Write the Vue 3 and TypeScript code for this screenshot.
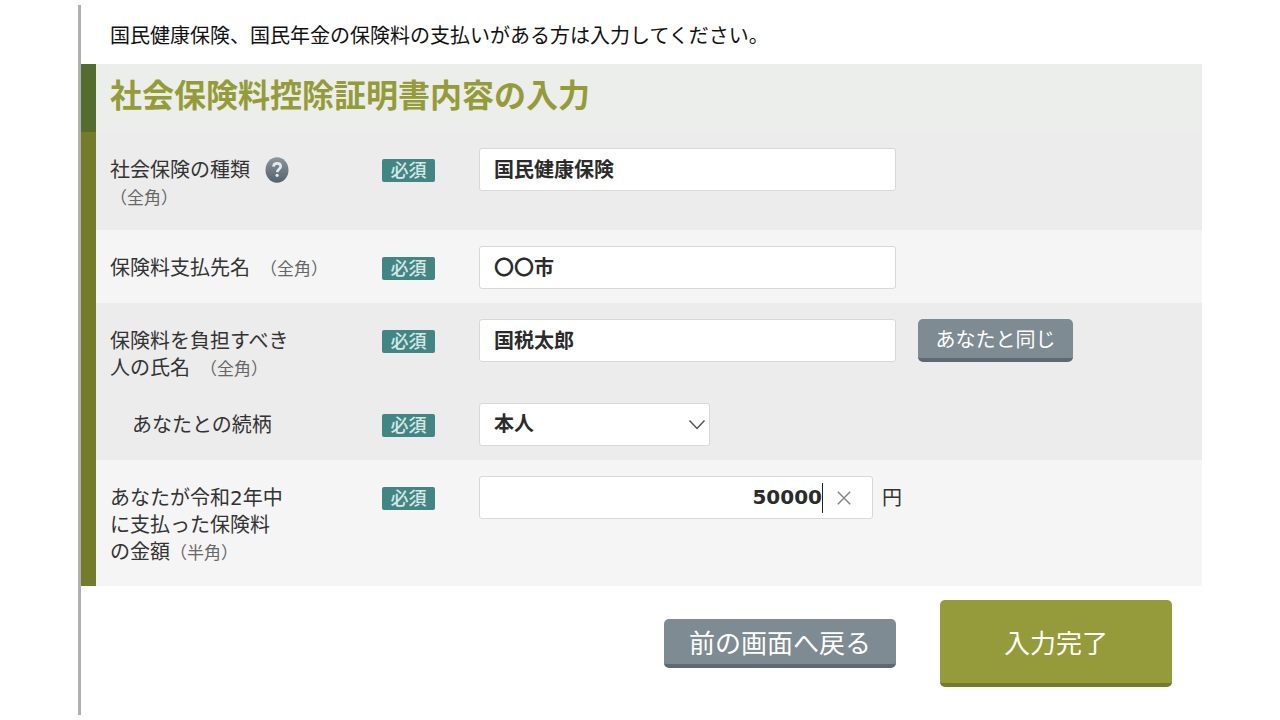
<script setup lang="ts">
import { ref } from 'vue'

const kind = ref('国民健康保険')
const payee = ref('〇〇市')
const payer = ref('国税太郎')
const relation = ref('本人')
const amount = ref('50000')
</script>

<template>
  <main class="page">
    <p class="intro">国民健康保険、国民年金の保険料の支払いがある方は入力してください。</p>
    <form class="form" @submit.prevent>
      <h1 class="title">社会保険料控除証明書内容の入力</h1>

      <section class="group">
        <div class="row">
          <div class="name">
            <label for="kind">社会保険の種類</label>
            <button type="button" class="help" aria-label="ヘルプ">
              <svg viewBox="0 0 24 26" width="24" height="26" aria-hidden="true">
                <defs>
                  <linearGradient id="ball" x1="0" y1="0" x2="0" y2="1">
                    <stop offset="0" stop-color="#8b969d" />
                    <stop offset="0.45" stop-color="#727e87" />
                    <stop offset="1" stop-color="#56626b" />
                  </linearGradient>
                </defs>
                <ellipse cx="12" cy="13" rx="11.5" ry="12.7" fill="url(#ball)" />
                <path d="M8.400 9.600c.3-2.200 1.700-3.200 3.700-3.200 2.100 0 3.600 1.100 3.600 3 0 2.400-3.200 2.900-3.500 5.800" fill="none" stroke="#e6eaec" stroke-width="2.600" />
                <circle cx="12.100" cy="18.300" r="1.600" fill="#e6eaec" />
              </svg>
            </button>
            <br /><small>（全角）</small>
          </div>
          <span class="badge">必須</span>
          <div class="field"><input id="kind" v-model="kind" class="box" type="text" /></div>
        </div>
      </section>

      <section class="group">
        <div class="row">
          <label class="name" for="payee">保険料支払先名<small class="apart">（全角）</small></label>
          <span class="badge">必須</span>
          <div class="field"><input id="payee" v-model="payee" class="box" type="text" /></div>
        </div>
      </section>

      <section class="group">
        <div class="row tight">
          <label class="name" for="payer">保険料を負担すべき<br />人の氏名<small class="apart">（全角）</small></label>
          <span class="badge">必須</span>
          <div class="field">
            <input id="payer" v-model="payer" class="box" type="text" />
            <button type="button" class="btn same">あなたと同じ</button>
          </div>
        </div>
        <div class="row">
          <label class="name indent" for="relation">あなたとの続柄</label>
          <span class="badge">必須</span>
          <div class="field">
            <div class="picker">
              <select id="relation" v-model="relation" class="box">
                <option>本人</option>
                <option>配偶者</option>
                <option>子</option>
              </select>
              <svg class="chevron" viewBox="0 0 18 12" width="18" height="12" aria-hidden="true">
                <path d="M1.500 1.500 9 9.500l7.500-8" fill="none" stroke="#555" stroke-width="1.500" />
              </svg>
            </div>
          </div>
        </div>
      </section>

      <section class="group">
        <div class="row">
          <label class="name" for="amount">あなたが令和2年中<br />に支払った保険料<br />の金額<small>（半角）</small></label>
          <span class="badge">必須</span>
          <div class="field">
            <div class="box money">
              <input id="amount" v-model="amount" type="text" inputmode="numeric" />
              <span class="caret"></span>
              <button type="button" class="clear" aria-label="消去" @click="amount = ''">
                <svg viewBox="0 0 14 14" width="14" height="14" aria-hidden="true">
                  <path d="M.8.8l12.400 12.400M13.200.8.8 13.200" fill="none" stroke="#808080" stroke-width="1.400" />
                </svg>
              </button>
            </div>
            <span class="unit">円</span>
          </div>
        </div>
      </section>
    </form>

    <div class="actions">
      <button type="button" class="btn back">前の画面へ戻る</button>
      <button type="button" class="btn done">入力完了</button>
    </div>
  </main>
</template>

<style>
body {
  background: #fff;
}
</style>

<style scoped>
.page,
.page * {
  box-sizing: border-box;
}
.page {
  margin: 5px 78px;
  min-height: calc(100vh - 10px);
  border-left: 3px solid #b0b0b4;
  font-family: "DejaVu Sans", "Noto Sans CJK JP", sans-serif;
  font-size: 20px;
  line-height: 27px;
  color: #333;
}
button,
input,
select {
  font-family: inherit;
  font-size: inherit;
}
.intro {
  margin: 0;
  padding: 18px 29px 14px;
  color: #111;
}
.title {
  margin: 0;
  padding: 12px 14px 16px;
  border-left: 15px solid #546d2e;
  background: #ebeeeb;
  color: #959b38;
  font-size: 32px;
  line-height: 40px;
  font-weight: 700;
}
.group {
  border-left: 15px solid #757c29;
  background: #ececec;
}
.group:nth-of-type(even) {
  background: #f5f5f5;
}
.row {
  display: grid;
  grid-template-columns: 272px 97px 1fr;
  align-items: start;
  padding: 0 14px 20px;
}
.group:nth-of-type(1) .row {
  padding-bottom: 19px;
}
.group:nth-of-type(2) .row,
.group:nth-of-type(3) .row {
  padding-bottom: 14px;
}
.group:nth-of-type(3) .row.tight {
  padding-bottom: 5px;
}
.name {
  padding-top: 25px;
}
.indent {
  padding-left: 22px;
}
small {
  font-size: 17px;
  line-height: 20px;
  color: #666;
}
.apart {
  margin-left: 10px;
}
.help {
  margin: 0 0 0 15px;
  padding: 0;
  border: 0;
  background: none;
  line-height: 0;
  height: 26px;
  vertical-align: -6px;
}
.badge {
  justify-self: start;
  margin-top: 27px;
  width: 53px;
  height: 23px;
  border-radius: 2px;
  background: #438583;
  color: #d5e8e6;
  font-size: 18px;
  font-weight: 500;
  line-height: 23px;
  text-align: center;
}
.field {
  display: flex;
  align-items: flex-start;
  padding-top: 16px;
}
.box {
  width: 417px;
  max-width: 100%;
  height: 43px;
  padding: 0 14px 2px;
  border: 1px solid #d8d8d8;
  border-radius: 3px;
  background: #fff;
  color: #2b2b2b;
  font-weight: 700;
  outline: none;
}
.picker {
  position: relative;
  width: 231px;
}
.picker .box {
  width: 100%;
  appearance: none;
}
.chevron {
  position: absolute;
  right: 4px;
  top: 16px;
  pointer-events: none;
}
.money {
  display: flex;
  align-items: center;
  width: 394px;
  padding: 0 21px 0 14px;
}
.money input {
  flex: 1;
  min-width: 0;
  height: 36px;
  padding: 0 0 2px;
  border: 0;
  outline: none;
  background: none;
  color: inherit;
  font-weight: 700;
  text-align: right;
}
.caret {
  width: 1px;
  height: 30px;
  background: #222;
}
.clear {
  margin-left: 14px;
  padding: 0;
  border: 0;
  background: none;
  line-height: 0;
}
.unit {
  padding: 9px 0 0 9px;
}
.btn {
  border: 0;
  border-radius: 5px;
  background: #7f8b92;
  border-bottom: 4px solid #5e6a73;
  color: #fff;
  padding: 0;
}
.same {
  margin-left: 22px;
  width: 155px;
  height: 43px;
}
.actions {
  display: flex;
  justify-content: flex-end;
  align-items: center;
  gap: 44px;
  padding: 14px 30px 28px 0;
  font-size: 26px;
}
.back {
  width: 232px;
  height: 49px;
}
.done {
  width: 232px;
  height: 87px;
  background: #959b3a;
  border-bottom-color: #757c29;
}
</style>
